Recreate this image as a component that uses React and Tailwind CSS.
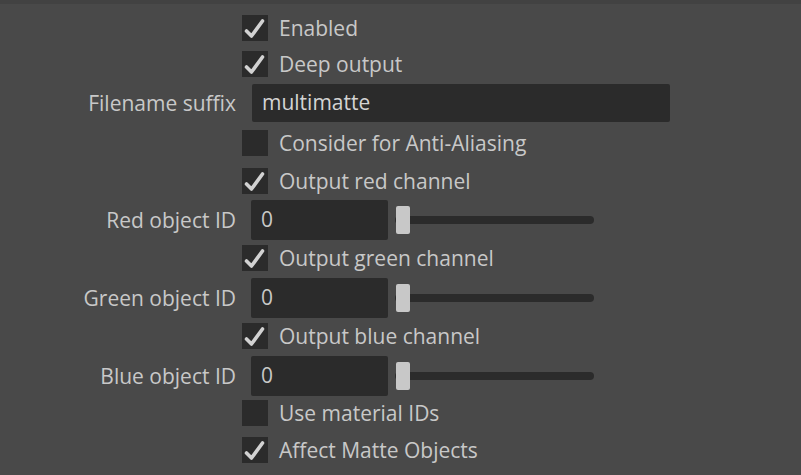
import React from "react";

const font = { fontFamily: '"Open Sans", "Noto Sans", sans-serif' };

function Check({ checked }) {
  return (
    <div className="w-[26px] h-[26px] bg-[#2b2b2b] shrink-0 flex items-center justify-center">
      {checked && (
        <svg width="26" height="26" viewBox="0 0 26 26">
          <path d="M4.5 16 L9.5 21 L20.5 6" fill="none" stroke="#d2d2d2" strokeWidth="3.6" strokeLinecap="round" strokeLinejoin="round" />
        </svg>
      )}
    </div>
  );
}

function CheckRow({ label, checked, h }) {
  return (
    <div className={`grid grid-cols-[242px_1fr] items-center ${h}`}>
      <div />
      <div className="flex items-center gap-[11px]">
        <Check checked={checked} />
        <span className="text-[21px] text-[#c8c8c8] leading-none">{label}</span>
      </div>
    </div>
  );
}

function IdRow({ label, h }) {
  return (
    <div className={`grid grid-cols-[242px_1fr] items-center ${h}`}>
      <div className="text-right pr-[6px] text-[21px] text-[#c8c8c8] leading-none">{label}</div>
      <div className="flex items-center ml-[9px]">
        <div className="w-[137px] h-[40px] bg-[#2b2b2b] rounded-[2px] flex items-center pl-[10px] text-[21px] text-[#c8c8c8]">
          0
        </div>
        <div className="relative ml-[7px] w-[199px] h-[28px] flex items-center">
          <div className="w-full h-[8px] bg-[#2b2b2b] rounded-full" />
          <div className="absolute left-[1px] top-0 w-[14px] h-[28px] bg-[#c8c8c8] rounded-[2px]" />
        </div>
      </div>
    </div>
  );
}

export default function App() {
  return (
    <div className="w-[801px] h-[475px] bg-[#494949] overflow-hidden flex flex-col" style={font}>
      <div className="h-[4px] bg-[#424242]" />
      <div className="pt-[6px] flex flex-col">
        <CheckRow label="Enabled" checked h="h-[36px]" />
        <CheckRow label="Deep output" checked h="h-[36px]" />
        <div className="grid grid-cols-[242px_1fr] items-center h-[42px]">
          <div className="text-right pr-[6px] text-[21px] text-[#c8c8c8] leading-none">Filename suffix</div>
          <div className="ml-[10px] w-[418px] h-[38px] bg-[#2b2b2b] rounded-[2px] flex items-center pl-[10px] text-[21px] text-[#d4d4d4]">
            multimatte
          </div>
        </div>
        <CheckRow label="Consider for Anti-Aliasing" h="h-[38px]" />
        <CheckRow label="Output red channel" checked h="h-[38px]" />
        <IdRow label="Red object ID" h="h-[38px]" />
        <CheckRow label="Output green channel" checked h="h-[40px]" />
        <IdRow label="Green object ID" h="h-[38px]" />
        <CheckRow label="Output blue channel" checked h="h-[40px]" />
        <IdRow label="Blue object ID" h="h-[38px]" />
        <CheckRow label="Use material IDs" h="h-[38px]" />
        <CheckRow label="Affect Matte Objects" checked h="h-[36px]" />
      </div>
    </div>
  );
}
